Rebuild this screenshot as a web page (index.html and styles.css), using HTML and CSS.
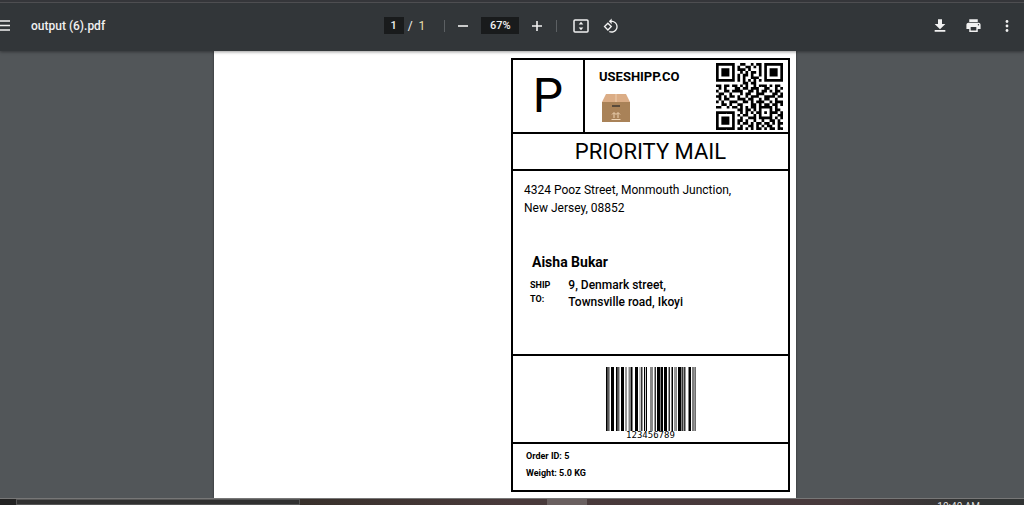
FILE: index.html
```html
<!DOCTYPE html>
<html lang="en">
<head>
<meta charset="utf-8">
<title>output (6).pdf</title>
<link rel="stylesheet" href="styles.css">
</head>
<body>
<header class="toolbar">
  <div class="toolbar-start">
    <button class="icon-button menu" aria-label="Menu"><svg width="12" height="12" viewBox="0 0 12 12"><path d="M0 1h10M0 5.500h10M0 10h10" stroke="#f1f1f1" stroke-width="1.700"/></svg></button>
    <h1 class="file-name">output (6).pdf</h1>
  </div>
  <div class="toolbar-center">
    <input class="field page-field" type="text" value="1" aria-label="Page number">
    <span class="slash">/</span>
    <span class="page-count">1</span>
    <span class="separator"></span>
    <button class="icon-button" aria-label="Zoom out"><svg width="12" height="12" viewBox="0 0 12 12"><path d="M1 6h10" stroke="#f1f1f1" stroke-width="1.600"/></svg></button>
    <input class="field zoom-field" type="text" value="67%" aria-label="Zoom level">
    <button class="icon-button" aria-label="Zoom in"><svg width="12" height="12" viewBox="0 0 12 12"><path d="M1 6h10M6 1v10" stroke="#f1f1f1" stroke-width="1.600"/></svg></button>
    <span class="separator"></span>
    <button class="icon-button fit" aria-label="Fit to page"><svg width="16" height="14" viewBox="0 0 16 14"><rect x="1" y="1" width="14" height="12" rx="1" fill="none" stroke="#f1f1f1" stroke-width="1.500"/><path d="M8 2.800l2.300 2.700H5.700zM8 11.200l2.300-2.700H5.700z" fill="#f1f1f1"/></svg></button>
    <button class="icon-button rotate" aria-label="Rotate"><svg width="16" height="16" viewBox="0 0 24 24" fill="#f1f1f1"><path d="M7.340 6.410L.860 12.900l6.490 6.480 6.490-6.480-6.500-6.490zM3.690 12.900l3.660-3.660L11 12.900l-3.660 3.660-3.650-3.660zm15.670-6.260C17.610 4.880 15.300 4 13 4V.760L8.760 5 13 9.240V6c1.790 0 3.580.680 4.950 2.050 2.730 2.730 2.730 7.170 0 9.900C16.580 19.320 14.790 20 13 20c-.970 0-1.940-.210-2.840-.610l-1.490 1.490C10.020 21.620 11.510 22 13 22c2.300 0 4.610-.880 6.360-2.640 3.520-3.510 3.520-9.210 0-12.720z"/></svg></button>
  </div>
  <div class="toolbar-end">
    <button class="icon-button" aria-label="Download"><svg width="16" height="16" viewBox="0 0 24 24" fill="#f1f1f1"><path d="M20 9h-5V2H9v7H4l8 8zM4 18v2.500h16V18z"/></svg></button>
    <button class="icon-button" aria-label="Print"><svg width="17" height="17" viewBox="0 0 24 24" fill="#f1f1f1"><path d="M19 8H5c-1.660 0-3 1.340-3 3v6h4v4h12v-4h4v-6c0-1.660-1.340-3-3-3zm-3 11H8v-5h8v5zm3-7c-.550 0-1-.450-1-1s.450-1 1-1 1 .450 1 1-.450 1-1 1zm-1-9H6v4h12V3z"/></svg></button>
    <button class="icon-button" aria-label="More actions"><svg width="16" height="16" viewBox="0 0 16 16" fill="#f1f1f1"><circle cx="8" cy="3.500" r="1.400"/><circle cx="8" cy="8" r="1.400"/><circle cx="8" cy="12.500" r="1.400"/></svg></button>
  </div>
</header>
<main class="viewer">
  <article class="sheet">
    <section class="label">
      <div class="label-head">
        <div class="mail-class">P</div>
        <div class="brand">
          <strong class="brand-name">USESHIPP.CO</strong>
          <svg class="parcel" width="28" height="28" viewBox="0 0 28 28" aria-hidden="true">
            <path d="M4 0h20l4 8H0z" fill="#dbad86"/><path d="M0 8h28v20H0z" fill="#a98258"/><path d="M14 0v8" stroke="#edcdae"/><path d="M10 12h8" stroke="#514538" stroke-width="1.800"/><path d="M12 24v-5M16 24v-5M10 20.500l2-2 2 2 2-2 2 2M9.500 25.500h9" stroke="#eed3b2" fill="none"/>
          </svg>
        </div>
        <svg class="qr" width="67" height="67" viewBox="0 0 25 25" role="img" aria-label="QR code"><path id="qr-modules"/></svg>
      </div>
      <h2 class="service">PRIORITY MAIL</h2>
      <div class="addresses">
        <p class="sender">4324 Pooz Street, Monmouth Junction,<br>New Jersey, 08852</p>
        <h3 class="recipient">Aisha Bukar</h3>
        <div class="ship-to">
          <span class="ship-caption">SHIP<br>TO:</span>
          <p class="ship-address">9, Denmark street,<br>Townsville road, Ikoyi</p>
        </div>
      </div>
      <div class="tracking">
        <svg width="90" height="64" viewBox="0 0 90 64" preserveAspectRatio="none" role="img" aria-label="Barcode">
          <path fill="#000" d="M0 0h1.700v64H0zM5 0h3v64H5zM10 0h1.700v64H10zM15 0h3v64h-3zM24.500 0h2v64h-2zM29 0h3v64h-3zM38 0h1.200v64H38zM40 0h1v64h-1zM51 0h3v64h-3zM54.500 0h2.500v64h-2.500zM58 0h3v64h-3zM65.500 0h1.500v64h-1.500zM72 0h3v64h-3zM82.500 0h2.500v64h-2.500zM86.500 0h1v64h-1z"/>
          <path fill="#333" d="M2.200 0h1.300v64H2.200zM12.200 0h1.200v64h-1.200zM19.500 0h1v64h-1zM35 0h1.500v64H35zM48.500 0h1.500v64h-1.500zM62.500 0h1.500v64h-1.500zM68.500 0h1v64h-1zM76 0h1.500v64H76zM78 0h1.500v64H78zM88.500 0h1.200v64h-1.200z"/>
          <path fill="#888" d="M22.500 0h1.500v64h-1.500zM33.500 0h1v64h-1zM44 0h3v64h-3zM70 0h1v64h-1zM75 0h1v64h-1z"/>
        </svg>
        <span class="tracking-number">123456789</span>
      </div>
      <div class="order">
        <p>Order ID: 5</p>
        <p>Weight: 5.0 KG</p>
      </div>
    </section>
  </article>
</main>
<footer class="taskbar">
  <div class="task-search"></div>
  <div class="task-apps"><div class="task-active"></div></div>
  <div class="clock">10:40 AM</div>
</footer>
<script src="qr.js"></script>
</body>
</html>
```
FILE: styles.css
```css
* { box-sizing: border-box; }
body {
  margin: 0;
  height: 100vh;
  display: flex;
  flex-direction: column;
  overflow: hidden;
  background: #525659;
  font-family: Roboto, "Liberation Sans", sans-serif;
}
h1, h2, h3, p { margin: 0; }
svg { display: block; }
.toolbar {
  position: relative;
  z-index: 1;
  flex: none;
  display: grid;
  grid-template-columns: 1fr auto 1fr;
  align-items: center;
  height: 51px;
  padding: 0 9px 2px 0;
  border-top: 2px solid #35363a;
  background: #323639;
  box-shadow: inset 0 1px #4e4e51, 0 1px 3px rgba(0, 0, 0, .4);
  color: #f1f1f1;
}
.toolbar-start, .toolbar-center, .toolbar-end { display: flex; align-items: center; }
.toolbar-start { gap: 19px; }
.toolbar-end { justify-content: flex-end; gap: 17px; }
.toolbar-center { margin-right: 12px; }
.icon-button {
  display: flex;
  padding: 0;
  border: 0;
  background: none;
}
.file-name { font-size: 12px; font-weight: 500; }
.field {
  height: 17px;
  padding: 0;
  border: 0;
  background: #191b1c;
  color: #f1f1f1;
  font: 500 11px Roboto, sans-serif;
  text-align: center;
}
.page-field { width: 20px; }
.zoom-field { width: 38px; margin: 0 12px; }
.slash { margin-left: 4px; font-size: 12px; }
.page-count { margin-left: 6px; color: #e8dfae; font-size: 12px; }
.separator { width: 1px; height: 12px; margin: 0 12px 0 19px; background: #5c6063; }
.icon-button + .separator { margin: 0 16px 0 13px; }
.rotate { margin-left: 14px; }

.viewer {
  flex: 1;
  min-height: 0;
  display: flex;
  justify-content: center;
  align-items: stretch;
  padding-right: 14px;
  overflow: hidden;
}
.sheet {
  display: flex;
  justify-content: flex-end;
  align-items: flex-start;
  width: 100%;
  max-width: 582px;
  padding: 7px 6px 6px;
  background: #fff;
  box-shadow: 0 0 2px #292b2d;
  color: #000;
}
.label { flex: 0 1 279px; border: 2px solid #000; }
.label-head { display: flex; align-items: center; min-height: 72px; }
.mail-class {
  width: 72px;
  align-self: stretch;
  border-right: 2px solid #000;
  font-size: 48px;
  line-height: 72px;
  text-align: center;
}
.brand { flex: 1; align-self: stretch; padding: 9px 0 0 14px; }
.brand-name { display: block; font-size: 13px; font-weight: 700; line-height: 16px; }
.parcel { margin: 9px 0 0 3px; }
.qr { margin-right: 5px; }
.service {
  border-top: 2px solid #000;
  border-bottom: 2px solid #000;
  font-size: 22px;
  font-weight: 400;
  line-height: 35px;
  text-align: center;
}
.addresses { min-height: 183px; padding: 10px 11px; }
.sender { font-size: 12px; line-height: 18px; }
.recipient { margin: 36px 0 0 8px; font-size: 14px; font-weight: 700; line-height: 18px; }
.ship-to { display: flex; gap: 18px; margin: 6px 0 0 6px; }
.ship-caption { font-size: 9px; font-weight: 700; line-height: 14px; padding-top: 1px; }
.ship-address { font-size: 12px; font-weight: 500; line-height: 17px; }
.tracking {
  display: flex;
  flex-direction: column;
  align-items: center;
  min-height: 88px;
  padding-top: 11px;
  border-top: 2px solid #000;
}
.tracking-number { font: 9px/9px "DejaVu Sans Mono", monospace; }
.order {
  min-height: 48px;
  padding: 4px 13px;
  border-top: 2px solid #000;
  font-size: 9px;
  font-weight: 700;
  line-height: 17px;
}
.taskbar {
  flex: none;
  display: flex;
  height: 7px;
  overflow: hidden;
  border-top: 1px solid #777;
  background: linear-gradient(90deg, #222 0 2%, #39312c 30%, #493a3b 50%, #483a3c 82%, #303333 95%);
}
.task-search { width: 284px; margin-left: 16px; border: 1px solid #555; background: #303030; }
.task-apps { flex: 1; display: flex; padding-left: 247px; }
.task-active { width: 40px; background: #6a6060; }
.clock { padding-right: 44px; color: #ddd; font-size: 10px; line-height: 16px; }
```
FILE: qr.js
```js
const rows = [
  "#######..##..#.##.#######",
  "#.....#.#..##.#.#.#.....#",
  "#.###.#.###.#...#.#.###.#",
  "#.###.#..#.#.##.#.#.###.#",
  "#.###.#.#.##.#..#.#.###.#",
  "#.....#.#.#..###..#.....#",
  "#######.#.#.#.#.#.#######",
  "..........##.##..........",
  "##.##.##.#.#..#.###.#.##.",
  ".#.#...##.##.###..##..#.#",
  "#..##.####..##.#.##.#.##.",
  ".##..#...#.##..###...##.#",
  "##.#.##.#..#.###..####.##",
  ".#.##...###.##..#.##..#..",
  "#.#..###..##.#.###..#.###",
  "..##.#..##...##.#.##.##.#",
  "##..#.##.#.#.##.#####.#..",
  "........##.##.#.#...#.##.",
  "#######..#.#.#.##.#.###.#",
  "#.....#.#.##..#.#...#..##",
  "#.###.#..#..###.#####.#.#",
  "#.###.#.##.#..#..#..##.#.",
  "#.###.#.#.##.#.##.##.#.##",
  "#.....#..#..##.#.#.##..#.",
  "#######.##.#.#.##.#.##.##"
];
const modules = rows.flatMap((row, y) =>
  [...row].map((cell, x) => cell === "#" ? `M${x} ${y}h1v1h-1z` : "")
);
document.getElementById("qr-modules").setAttribute("d", modules.join(""));
```
